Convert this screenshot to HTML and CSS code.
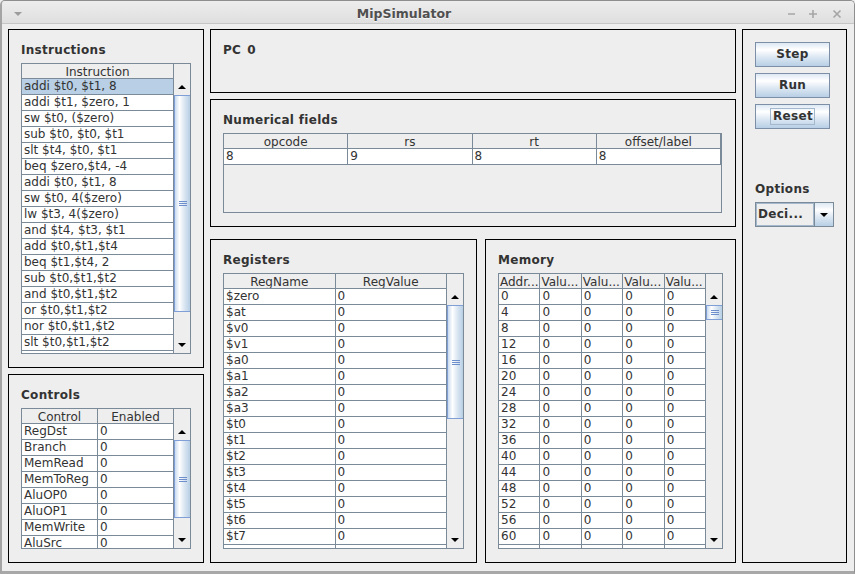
FILE: index.html
```html
<!DOCTYPE html>
<html>
<head>
<meta charset="utf-8">
<title>MipSimulator</title>
<link rel="stylesheet" href="styles.css">
</head>
<body>
<div class="window">
  <div class="titlebar">
    <svg class="tb-menu" width="8" height="4" viewBox="0 0 8 4"><polygon points="0,0 8,0 4,4" fill="#9c9c9c"/></svg>
    <div class="title">MipSimulator</div>
    <svg class="tb-btns" width="56" height="10" viewBox="0 0 56 10">
      <g stroke="#a6a6a6" stroke-width="1.6" fill="none">
        <line x1="2" y1="5" x2="9" y2="5"/>
        <line x1="23" y1="5" x2="31" y2="5"/>
        <line x1="27" y1="1" x2="27" y2="9"/>
        <line x1="47.5" y1="1.5" x2="54.5" y2="8.5"/>
        <line x1="54.5" y1="1.5" x2="47.5" y2="8.5"/>
      </g>
    </svg>
  </div>

  <div class="content">
    <div class="col col-left">
      <section class="panel instr">
        <div class="heading">Instructions</div>
        <div class="pane">
          <div class="thead"><div class="th">Instruction</div></div>
          <div class="corner"></div>
          <div class="tbody">
            <div class="tr sel"><div class="td">addi $t0, $t1, 8</div></div>
            <div class="tr"><div class="td">addi $t1, $zero, 1</div></div>
            <div class="tr"><div class="td">sw $t0, ($zero)</div></div>
            <div class="tr"><div class="td">sub $t0, $t0, $t1</div></div>
            <div class="tr"><div class="td">slt $t4, $t0, $t1</div></div>
            <div class="tr"><div class="td">beq $zero,$t4, -4</div></div>
            <div class="tr"><div class="td">addi $t0, $t1, 8</div></div>
            <div class="tr"><div class="td">sw $t0, 4($zero)</div></div>
            <div class="tr"><div class="td">lw $t3, 4($zero)</div></div>
            <div class="tr"><div class="td">and $t4, $t3, $t1</div></div>
            <div class="tr"><div class="td">add $t0,$t1,$t4</div></div>
            <div class="tr"><div class="td">beq $t1,$t4, 2</div></div>
            <div class="tr"><div class="td">sub $t0,$t1,$t2</div></div>
            <div class="tr"><div class="td">and $t0,$t1,$t2</div></div>
            <div class="tr"><div class="td">or $t0,$t1,$t2</div></div>
            <div class="tr"><div class="td">nor $t0,$t1,$t2</div></div>
            <div class="tr"><div class="td">slt $t0,$t1,$t2</div></div>
            <div class="tr"><div class="td">&nbsp;</div></div>
          </div>
          <div class="sb">
            <div class="sb-btn"><svg width="8" height="4" viewBox="0 0 8 4"><polygon points="0,4 4,0 8,4" fill="#000"/></svg></div>
            <div class="thumb thumb-instr"><svg class="grip" width="8" height="5" viewBox="0 0 8 5"><g fill="#6f8fcc"><rect x="0" y="0" width="8" height="1"/><rect x="0" y="2" width="8" height="1"/><rect x="0" y="4" width="8" height="1"/></g></svg></div>
            <div class="track"></div>
            <div class="sb-btn"><svg width="8" height="4" viewBox="0 0 8 4"><polygon points="0,0 8,0 4,4" fill="#000"/></svg></div>
          </div>
        </div>
      </section>

      <section class="panel controls">
        <div class="heading">Controls</div>
        <div class="pane">
          <div class="thead"><div class="th">Control</div><div class="th">Enabled</div></div>
          <div class="corner"></div>
          <div class="tbody">
            <div class="tr"><div class="td">RegDst</div><div class="td">0</div></div>
            <div class="tr"><div class="td">Branch</div><div class="td">0</div></div>
            <div class="tr"><div class="td">MemRead</div><div class="td">0</div></div>
            <div class="tr"><div class="td">MemToReg</div><div class="td">0</div></div>
            <div class="tr"><div class="td">AluOP0</div><div class="td">0</div></div>
            <div class="tr"><div class="td">AluOP1</div><div class="td">0</div></div>
            <div class="tr"><div class="td">MemWrite</div><div class="td">0</div></div>
            <div class="tr"><div class="td">AluSrc</div><div class="td">0</div></div>
            <div class="tr"><div class="td">&nbsp;</div><div class="td">&nbsp;</div></div>
          </div>
          <div class="sb">
            <div class="sb-btn"><svg width="8" height="4" viewBox="0 0 8 4"><polygon points="0,4 4,0 8,4" fill="#000"/></svg></div>
            <div class="thumb thumb-ctrl"><svg class="grip" width="8" height="5" viewBox="0 0 8 5"><g fill="#6f8fcc"><rect x="0" y="0" width="8" height="1"/><rect x="0" y="2" width="8" height="1"/><rect x="0" y="4" width="8" height="1"/></g></svg></div>
            <div class="track"></div>
            <div class="sb-btn"><svg width="8" height="4" viewBox="0 0 8 4"><polygon points="0,0 8,0 4,4" fill="#000"/></svg></div>
          </div>
        </div>
      </section>
    </div>

    <div class="col col-mid">
      <section class="panel pc">
        <div class="heading"><span>PC</span><span class="pc-val">0</span></div>
      </section>

      <section class="panel numf">
        <div class="heading">Numerical fields</div>
        <div class="pane pane-noscroll">
          <div class="thead"><div class="th">opcode</div><div class="th">rs</div><div class="th">rt</div><div class="th">offset/label</div></div>
          <div class="tbody">
            <div class="tr"><div class="td">8</div><div class="td">9</div><div class="td">8</div><div class="td">8</div></div>
          </div>
        </div>
      </section>

      <div class="row-bottom">
        <section class="panel regs">
          <div class="heading">Registers</div>
          <div class="pane">
            <div class="thead"><div class="th">RegName</div><div class="th">RegValue</div></div>
            <div class="corner"></div>
            <div class="tbody">
              <div class="tr"><div class="td">$zero</div><div class="td">0</div></div>
              <div class="tr"><div class="td">$at</div><div class="td">0</div></div>
              <div class="tr"><div class="td">$v0</div><div class="td">0</div></div>
              <div class="tr"><div class="td">$v1</div><div class="td">0</div></div>
              <div class="tr"><div class="td">$a0</div><div class="td">0</div></div>
              <div class="tr"><div class="td">$a1</div><div class="td">0</div></div>
              <div class="tr"><div class="td">$a2</div><div class="td">0</div></div>
              <div class="tr"><div class="td">$a3</div><div class="td">0</div></div>
              <div class="tr"><div class="td">$t0</div><div class="td">0</div></div>
              <div class="tr"><div class="td">$t1</div><div class="td">0</div></div>
              <div class="tr"><div class="td">$t2</div><div class="td">0</div></div>
              <div class="tr"><div class="td">$t3</div><div class="td">0</div></div>
              <div class="tr"><div class="td">$t4</div><div class="td">0</div></div>
              <div class="tr"><div class="td">$t5</div><div class="td">0</div></div>
              <div class="tr"><div class="td">$t6</div><div class="td">0</div></div>
              <div class="tr"><div class="td">$t7</div><div class="td">0</div></div>
              <div class="tr"><div class="td">&nbsp;</div><div class="td">&nbsp;</div></div>
            </div>
            <div class="sb">
              <div class="sb-btn"><svg width="8" height="4" viewBox="0 0 8 4"><polygon points="0,4 4,0 8,4" fill="#000"/></svg></div>
              <div class="thumb thumb-regs"><svg class="grip" width="8" height="5" viewBox="0 0 8 5"><g fill="#6f8fcc"><rect x="0" y="0" width="8" height="1"/><rect x="0" y="2" width="8" height="1"/><rect x="0" y="4" width="8" height="1"/></g></svg></div>
              <div class="track"></div>
              <div class="sb-btn"><svg width="8" height="4" viewBox="0 0 8 4"><polygon points="0,0 8,0 4,4" fill="#000"/></svg></div>
            </div>
          </div>
        </section>

        <section class="panel mem">
          <div class="heading">Memory</div>
          <div class="pane">
            <div class="thead"><div class="th th-left">Addr...</div><div class="th th-left">Valu...</div><div class="th th-left">Valu...</div><div class="th th-left">Valu...</div><div class="th th-left">Valu...</div></div>
            <div class="corner"></div>
            <div class="tbody">
              <div class="tr"><div class="td">0</div><div class="td">0</div><div class="td">0</div><div class="td">0</div><div class="td">0</div></div>
              <div class="tr"><div class="td">4</div><div class="td">0</div><div class="td">0</div><div class="td">0</div><div class="td">0</div></div>
              <div class="tr"><div class="td">8</div><div class="td">0</div><div class="td">0</div><div class="td">0</div><div class="td">0</div></div>
              <div class="tr"><div class="td">12</div><div class="td">0</div><div class="td">0</div><div class="td">0</div><div class="td">0</div></div>
              <div class="tr"><div class="td">16</div><div class="td">0</div><div class="td">0</div><div class="td">0</div><div class="td">0</div></div>
              <div class="tr"><div class="td">20</div><div class="td">0</div><div class="td">0</div><div class="td">0</div><div class="td">0</div></div>
              <div class="tr"><div class="td">24</div><div class="td">0</div><div class="td">0</div><div class="td">0</div><div class="td">0</div></div>
              <div class="tr"><div class="td">28</div><div class="td">0</div><div class="td">0</div><div class="td">0</div><div class="td">0</div></div>
              <div class="tr"><div class="td">32</div><div class="td">0</div><div class="td">0</div><div class="td">0</div><div class="td">0</div></div>
              <div class="tr"><div class="td">36</div><div class="td">0</div><div class="td">0</div><div class="td">0</div><div class="td">0</div></div>
              <div class="tr"><div class="td">40</div><div class="td">0</div><div class="td">0</div><div class="td">0</div><div class="td">0</div></div>
              <div class="tr"><div class="td">44</div><div class="td">0</div><div class="td">0</div><div class="td">0</div><div class="td">0</div></div>
              <div class="tr"><div class="td">48</div><div class="td">0</div><div class="td">0</div><div class="td">0</div><div class="td">0</div></div>
              <div class="tr"><div class="td">52</div><div class="td">0</div><div class="td">0</div><div class="td">0</div><div class="td">0</div></div>
              <div class="tr"><div class="td">56</div><div class="td">0</div><div class="td">0</div><div class="td">0</div><div class="td">0</div></div>
              <div class="tr"><div class="td">60</div><div class="td">0</div><div class="td">0</div><div class="td">0</div><div class="td">0</div></div>
              <div class="tr"><div class="td">&nbsp;</div><div class="td">&nbsp;</div><div class="td">&nbsp;</div><div class="td">&nbsp;</div><div class="td">&nbsp;</div></div>
            </div>
            <div class="sb">
              <div class="sb-btn"><svg width="8" height="4" viewBox="0 0 8 4"><polygon points="0,4 4,0 8,4" fill="#000"/></svg></div>
              <div class="thumb thumb-mem"><svg class="grip" width="8" height="5" viewBox="0 0 8 5"><g fill="#6f8fcc"><rect x="0" y="0" width="8" height="1"/><rect x="0" y="2" width="8" height="1"/><rect x="0" y="4" width="8" height="1"/></g></svg></div>
              <div class="track"></div>
              <div class="sb-btn"><svg width="8" height="4" viewBox="0 0 8 4"><polygon points="0,0 8,0 4,4" fill="#000"/></svg></div>
            </div>
          </div>
        </section>
      </div>
    </div>

    <section class="panel right">
      <div class="btn">Step</div>
      <div class="btn">Run</div>
      <div class="btn"><span class="focus">Reset</span></div>
      <div class="heading options">Options</div>
      <div class="combo">
        <div class="combo-val">Deci...</div>
        <div class="combo-btn"><svg width="8" height="4" viewBox="0 0 8 4"><polygon points="0,0 8,0 4,4" fill="#000"/></svg></div>
      </div>
    </section>
  </div>
</div>
</body>
</html>
```

FILE: styles.css
```css
html, body {
  margin: 0;
  padding: 0;
  background: #eeeeee;
}

body {
  font-family: "DejaVu Sans", "Liberation Sans", sans-serif;
  font-size: 12px;
  color: #333333;
}

.window {
  width: 855px;
  height: 574px;
  box-sizing: border-box;
  border: 1px solid #8e8e8e;
  border-bottom: 3px solid #a8a8a8;
  border-left: 2px solid #a4a4a4;
  border-radius: 5px 5px 0 0;
  overflow: hidden;
  background: #eeeeee;
  display: flex;
  flex-direction: column;
}

/* ---------- title bar ---------- */
.titlebar {
  height: 23px;
  flex: none;
  box-sizing: border-box;
  background: linear-gradient(#ededed, #dfdfdf);
  border-bottom: 1px solid #c6c6c6;
  display: flex;
  align-items: center;
}

.tb-menu {
  margin-left: 12px;
  margin-top: 3px;
  flex: none;
}

.title {
  flex: 1;
  text-align: center;
  font-weight: bold;
  font-size: 12.5px;
  color: #505050;
  text-shadow: 0 1px 0 #f6f6f6;
  padding-top: 2px;
}

.tb-btns {
  flex: none;
  margin-right: 12px;
  margin-top: 4px;
}

/* ---------- main layout ---------- */
.content {
  display: grid;
  grid-template-columns: 196px 526px 105px;
  grid-template-rows: 534px;
  column-gap: 6px;
  padding: 5px 0 0 6px;
}

.col {
  display: flex;
  flex-direction: column;
  min-height: 0;
}

.col-left {
  gap: 6px;
}

.col-left .instr { height: 339px; }
.col-left .controls { height: 189px; }

.col-mid .pc { height: 64px; flex: none; }
.col-mid .numf { height: 128px; flex: none; margin-top: 6px; padding-right: 13px; }

.row-bottom {
  margin-top: 12px;
  height: 324px;
  display: flex;
  gap: 8px;
}

.row-bottom .regs { width: 267px; flex: none; }
.row-bottom .mem { width: 251px; flex: none; }

.panel {
  box-sizing: border-box;
  border: 1px solid #000000;
  padding: 13px 12px 13px 12px;
  display: flex;
  flex-direction: column;
  min-height: 0;
}

.heading {
  font-weight: bold;
  font-size: 12px;
  letter-spacing: 0.3px;
  line-height: 15px;
  height: 15px;
  margin-bottom: 5px;
  color: #333333;
  white-space: nowrap;
  flex: none;
}

.pc-val {
  margin-left: 6px;
}

/* ---------- tables ---------- */
.pane {
  flex: 1 1 auto;
  min-height: 0;
  box-sizing: border-box;
  border: 1px solid #7a8a99;
  background: #eeeeee;
  display: grid;
  grid-template-columns: minmax(0, 1fr) 16px;
  grid-template-rows: 15px minmax(0, 1fr);
  overflow: hidden;
}

.pane-noscroll {
  grid-template-columns: minmax(0, 1fr);
}

.thead {
  display: flex;
  box-sizing: border-box;
  height: 15px;
  border-bottom: 1px solid #7a8a99;
  background: #eeeeee;
  overflow: hidden;
}

.th {
  flex: 1 1 0;
  min-width: 0;
  box-sizing: border-box;
  border-right: 1px solid #7a8a99;
  text-align: center;
  line-height: 15px;
  height: 14px;
  padding-top: 1px;
  overflow: hidden;
  white-space: nowrap;
  color: #333333;
}

.th-left {
  text-align: left;
  padding-left: 1px;
}

.corner {
  background: #eeeeee;
}

.tbody {
  min-height: 0;
  overflow: hidden;
}

.tr {
  display: flex;
  box-sizing: border-box;
  height: 16px;
  border-bottom: 1px solid #7a8a99;
  background: #ffffff;
}

.tr.sel {
  background: #b8cfe5;
}

.td {
  flex: 1 1 0;
  min-width: 0;
  box-sizing: border-box;
  border-right: 1px solid #7a8a99;
  padding-left: 2px;
  line-height: 15px;
  overflow: hidden;
  white-space: nowrap;
}

/* ---------- scrollbars ---------- */
.sb {
  display: flex;
  flex-direction: column;
  min-height: 0;
  background: #eeeeee;
}

.sb-btn {
  flex: none;
  height: 16px;
  display: flex;
  align-items: center;
  justify-content: center;
  background: #eeeeee;
}

.thumb {
  flex: none;
  box-sizing: border-box;
  border: 1px solid #7f9fd6;
  border-right: none;
  background: linear-gradient(to right, #c9dbef 0%, #ffffff 30%, #dde8f3 60%, #b8cfe5 100%);
  display: flex;
  align-items: center;
  justify-content: center;
}

.thumb-instr { height: 217px; }
.thumb-ctrl { height: 78px; }
.thumb-regs { height: 114px; }
.thumb-mem { height: 15px; }

.track {
  flex: 1;
}

.grip {
  display: block;
}

/* ---------- right column ---------- */
.right {
  padding: 12px 12px 12px 12px;
  align-items: flex-start;
}

.btn {
  width: 75px;
  height: 25px;
  box-sizing: border-box;
  border: 1px solid #7d8fa6;
  background: linear-gradient(#dde8f3 0%, #ffffff 30%, #dde8f3 60%, #b8cfe5 100%);
  font-weight: bold;
  font-size: 12px;
  letter-spacing: 0.3px;
  line-height: 23px;
  text-align: center;
  color: #333333;
  margin-bottom: 6px;
  display: flex;
  align-items: center;
  justify-content: center;
}

.focus {
  border: 1px solid #a3b8cc;
  line-height: 15px;
  padding: 0 1px 0 2px;
}

.options {
  margin-top: 47px;
  margin-bottom: 5px;
}

.combo {
  display: flex;
  width: 79px;
  height: 25px;
  box-sizing: border-box;
  border: 1px solid #7a8a99;
}

.combo-val {
  flex: 1;
  box-sizing: border-box;
  border: 1px solid #a3b8cc;
  background: #eeeeee;
  font-weight: bold;
  letter-spacing: 0.3px;
  padding-left: 1px;
  line-height: 21px;
  white-space: nowrap;
  overflow: hidden;
}

.combo-btn {
  width: 19px;
  flex: none;
  box-sizing: border-box;
  border-left: 1px solid #7a8a99;
  background: linear-gradient(#dde8f3 0%, #ffffff 30%, #dde8f3 60%, #b8cfe5 100%);
  display: flex;
  align-items: center;
  justify-content: center;
}
```
